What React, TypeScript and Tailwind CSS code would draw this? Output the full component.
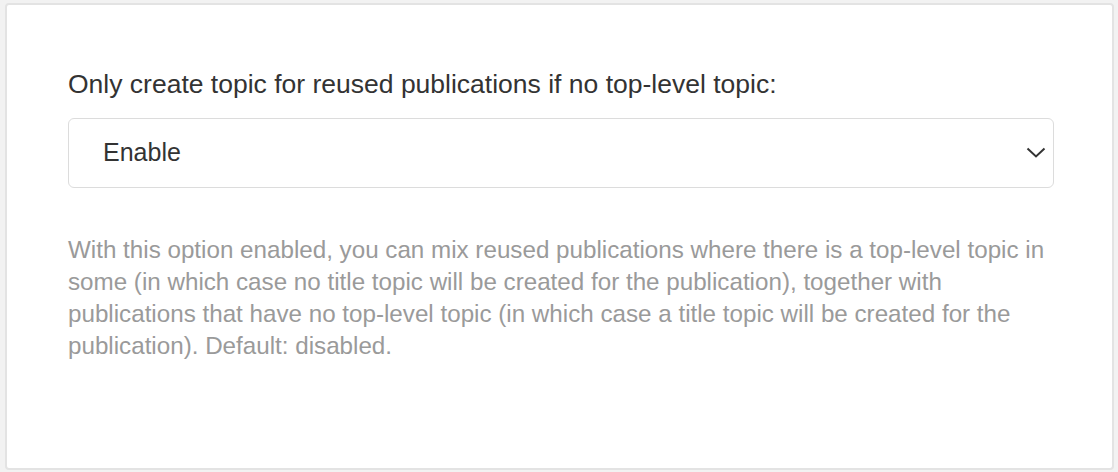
import { useState } from "react";

const options = ["Enable", "Disable"];

function App() {
  const [value, setValue] = useState("Enable");

  return (
    <div className="min-h-[472px] w-[1118px] bg-[#f2f2f2] pl-[5px] pr-[4px] pt-[3px] pb-[2px] font-['Liberation_Sans',Arial,sans-serif]">
      <div className="h-[467px] rounded-[4px] border-2 border-[#e3e3e3] bg-white pl-[61px] pr-[58px] pt-[63px]">
        <label className="block text-[26.5px] leading-[32px] text-[#333]">
          Only create topic for reused publications if no top-level topic:
        </label>
        <div className="relative mt-[18px] h-[70px] rounded-[6px] border-[1.5px] border-[#dcdcdc] bg-white">
          <div className="flex h-full items-center pl-[34px] text-[25px] text-[#333]">
            {value}
          </div>
          <select
            value={value}
            onChange={(e) => setValue(e.target.value)}
            className="absolute inset-0 h-full w-full cursor-pointer opacity-0"
          >
            {options.map((o) => (
              <option key={o}>{o}</option>
            ))}
          </select>
          <svg
            className="pointer-events-none absolute right-[7px] top-[28px]"
            width="20"
            height="11"
            viewBox="0 0 20 11"
            fill="none"
          >
            <path d="M1.5 1.5 L10 9.5 L18.5 1.5" stroke="#333" strokeWidth="2" />
          </svg>
        </div>
        <p className="mt-[46px] text-[24.2px] leading-[32px] text-[#9a9a9a]">
          With this option enabled, you can mix reused publications where there is a top-level topic in
          <br />
          some (in which case no title topic will be created for the publication), together with
          <br />
          publications that have no top-level topic (in which case a title topic will be created for the
          <br />
          publication). Default: disabled.
        </p>
      </div>
    </div>
  );
}

export default App;
